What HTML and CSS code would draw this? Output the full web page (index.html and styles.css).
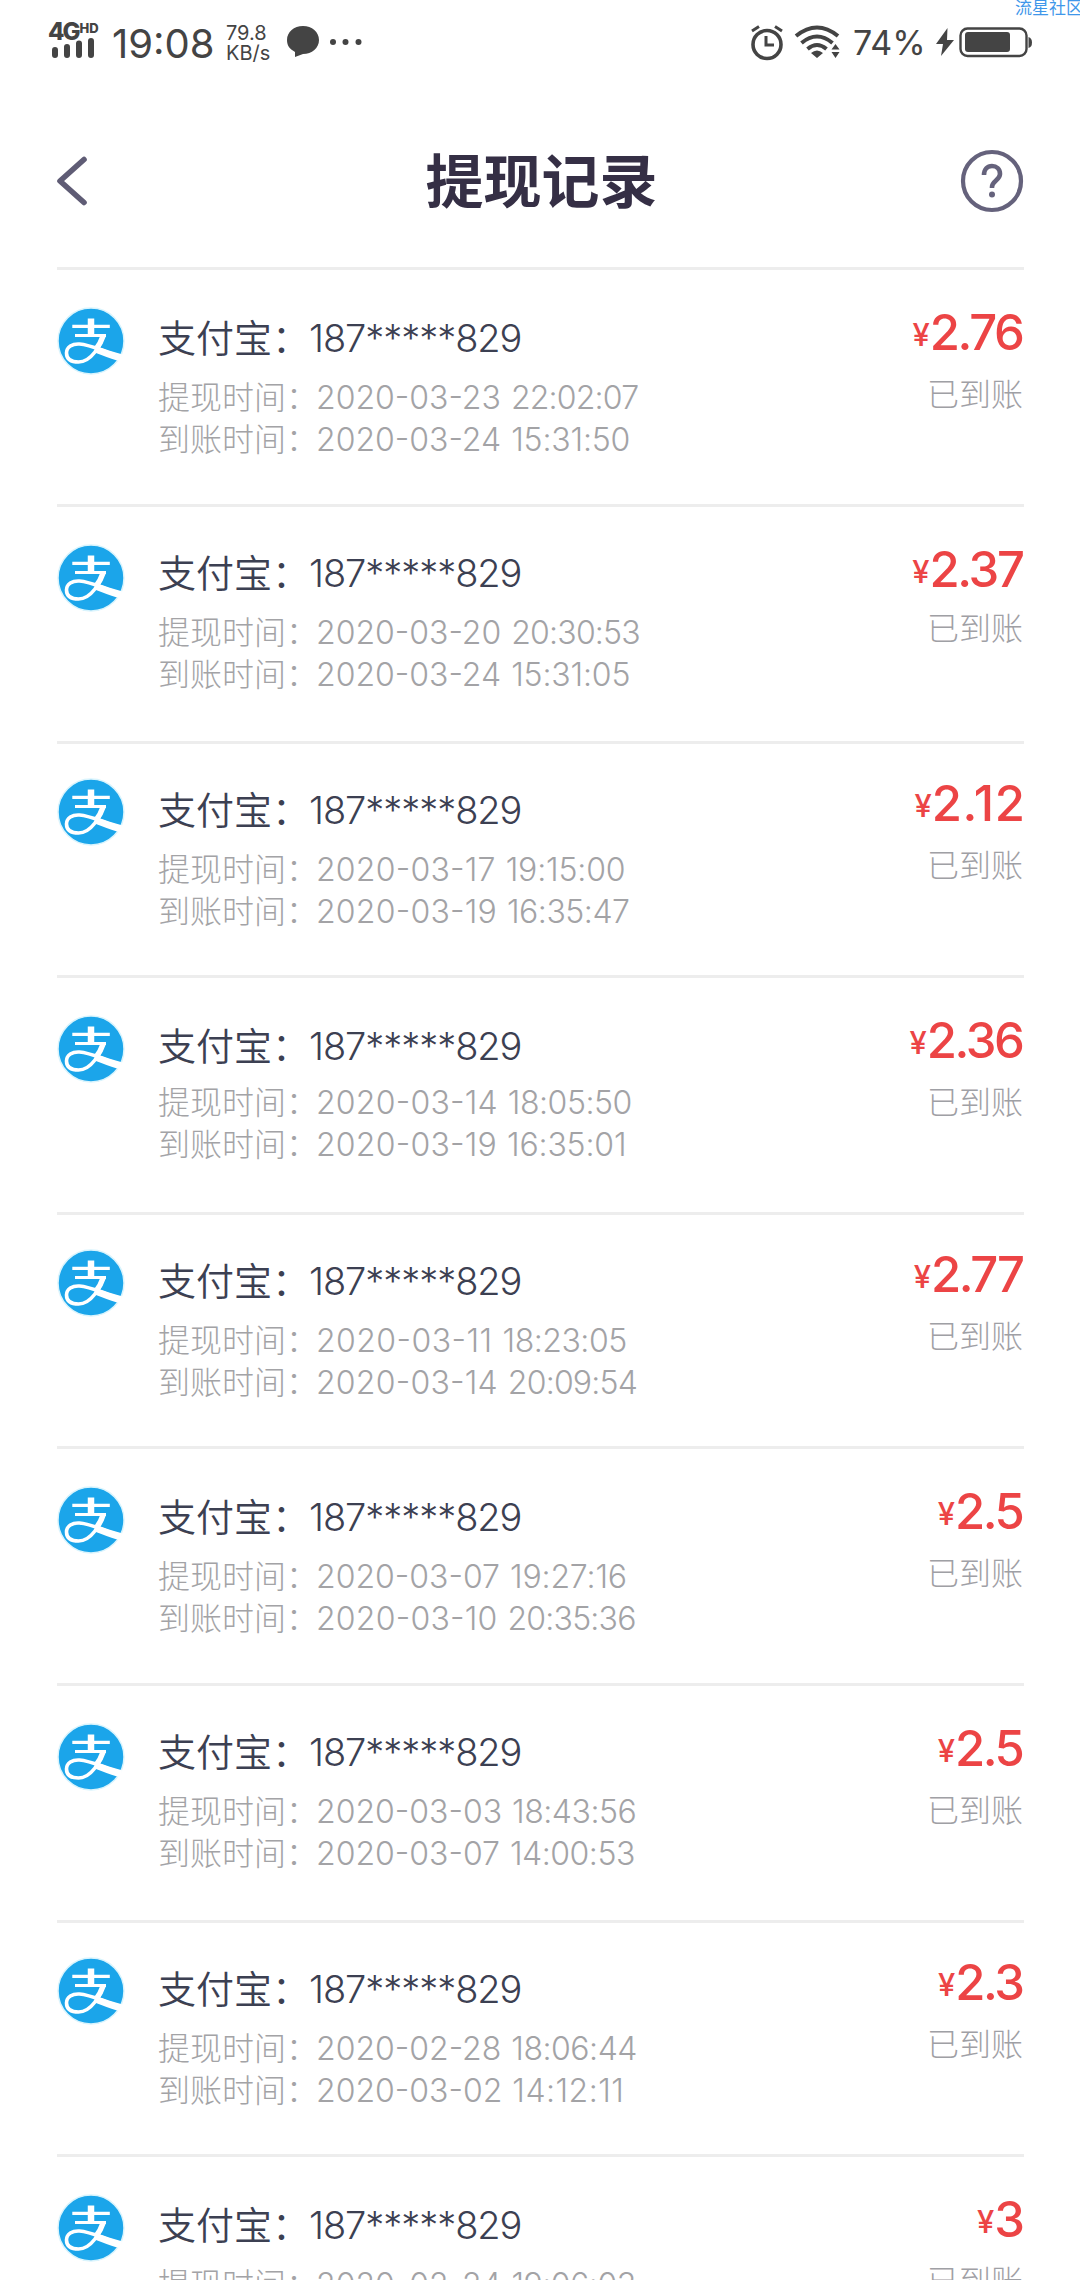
FILE: index.html
```
<!DOCTYPE html>
<html lang="zh-CN">
<head>
<meta charset="utf-8">
<title>提现记录</title>
<link rel="stylesheet" href="styles.css">
</head>
<body>
<div class="watermark">流星社区</div>
<header class="status">
  <div class="signal">
    <div class="net"><span>4G</span><small>HD</small></div>
    <svg width="44" height="20" viewBox="0 0 44 20"><path d="M3 12v5M15 9v8M27 5.500v11.500M39 3v14" stroke="#444" stroke-width="6" stroke-linecap="round"/></svg>
  </div>
  <div class="clock">19:08</div>
  <div class="speed"><span>79.8</span><span>KB/s</span></div>
  <svg class="bubble" width="76" height="34" viewBox="0 0 76 34"><path d="M16 1C7 1 0 7 0 15c0 6 3 9 8 12l0 5 8-3c9 0 16-6 16-14S25 1 16 1z" fill="#444"/><g fill="#444"><circle cx="46" cy="17" r="3"/><circle cx="58.500" cy="17" r="3"/><circle cx="71.500" cy="17" r="3"/></g></svg>
  <svg class="alarm" width="34" height="36" viewBox="0 0 34 36" fill="none" stroke="#444"><circle cx="17" cy="19.500" r="14" stroke-width="3.600"/><path d="M16 11v9h8" stroke-width="3"/><path d="M2 6l7-4.500M32 6l-7-4.500" stroke-width="3"/></svg>
  <svg class="wifi" width="48" height="34" viewBox="0 0 48 34" fill="none" stroke="#444" stroke-width="4"><path d="M2 11Q23-6 44 11M7.500 18Q23 5 38.500 18M13.500 24Q23 16 32.500 24"/><path d="M17 28Q23 23 29 28L23 33zM37.500 24.500h8L41.500 19zM37.500 27h8l-4 6z" fill="#444" stroke="none"/></svg>
  <div class="percent">74%</div>
  <svg class="battery" width="96" height="32" viewBox="0 0 96 32"><path d="M11.500 1L0 17h7L5 29l13-16h-7z" fill="#444"/><rect x="24.500" y="1.500" width="66" height="27.500" rx="7" fill="none" stroke="#444" stroke-width="2.400"/><rect x="29" y="5" width="45" height="20" rx="3" fill="#444"/><path d="M92.500 10q3.500 1 3.500 5.500t-3.500 5.500z" fill="#444"/></svg>
</header>
<nav class="bar">
  <svg width="34" height="52" viewBox="0 0 34 52"><path d="M29 4.500L5 26 29 47.500" fill="none" stroke="#5f5c75" stroke-width="5.600" stroke-linecap="round" stroke-linejoin="round"/></svg>
  <h1>提现记录</h1>
  <svg width="64" height="64" viewBox="0 0 64 64" fill="none" stroke="#65627c"><circle cx="32" cy="32" r="29" stroke-width="4.200"/><path d="M24 26c0-6 3.500-9 8-9s8 3 8 8c0 6-8 7-8 13v1" stroke-width="4.600"/><circle cx="32" cy="45.500" r="3" fill="#65627c" stroke="none"/></svg>
</nav>
<main class="list" id="list"></main>
<template id="row">
  <section class="row">
    <svg class="logo" width="68" height="68" viewBox="0 0 68 68"><circle cx="34" cy="34" r="33" fill="#1ba5ea" stroke="#d9f4fd" stroke-width="1.500"/><g fill="none" stroke="#fff"><path d="M15.300 19.300h37.500M18 28.500h31" stroke-width="3.200"/><path d="M34 11.500v17" stroke-width="6.500"/><path d="M46.500 28c-3 10-12 27-25 27-8 0-12-3-12-9 0-6 6-9.500 13-9 12 1 26 8 42 12" stroke-width="3.600"/><path d="M46.500 28c-2 6-4 10-8 15" stroke-width="5.500"/><path d="M39 42.500c8 3 15 6.500 25 8.500" stroke-width="6.500"/></g></svg>
    <div class="info">
      <div class="account"><span class="label">支付宝：</span><span class="number">187*****829</span></div>
      <div class="times"></div>
    </div>
    <div class="right"><div class="amount"><small>¥</small><b></b></div><div class="state">已到账</div></div>
  </section>
</template>
<template id="time">
  <div class="time"><span class="label"></span><span class="date"></span><span class="hour"></span></div>
</template>
<script src="app.js"></script>
</body>
</html>
```
FILE: styles.css
```
* { box-sizing: border-box; }
body { margin: 0; width: 1080px; height: 2280px; overflow: hidden; position: relative; background: #fff; font-family: "Inter", "Noto Sans CJK SC", sans-serif; }
svg { display: block; flex: none; }
.watermark { position: absolute; left: 1015px; top: -4px; font: 400 17px/22px "Noto Sans CJK SC", sans-serif; color: #3f97ea; white-space: nowrap; }
.status { height: 80px; display: flex; align-items: flex-start; padding-left: 48px; color: #444; }
.signal { width: 64px; padding-top: 20px; }
.signal svg { margin: -2px 0 0 4px; }
.net { display: flex; align-items: flex-start; height: 20px; font: 800 24px/24px "Inter"; letter-spacing: -2px; }
.net small { padding: 1px 0 0 1px; font-size: 13px; line-height: 15px; letter-spacing: 0; }
.clock { width: 114px; padding-top: 23px; font: 400 40px/42px "Inter"; white-space: nowrap; }
.speed { width: 61px; padding-top: 23px; display: flex; flex-direction: column; font: 400 20px/20px "Inter"; }
.bubble { margin-top: 25px; }
.alarm { margin: 25px 0 0 387px; }
.wifi { margin: 25px 0 0 10px; }
.percent { width: 83px; margin-left: 11px; padding-top: 23px; font: 400 34px/40px "Inter"; }
.battery { margin-top: 27px; }
.bar { height: 187px; display: flex; justify-content: space-between; align-items: flex-start; padding: 69px 56px 0 55px; }
.bar > svg:first-child { margin-top: 6px; margin-right: 34px; }
h1 { margin: -4px 0 0; font: 700 58px/66px "Noto Sans CJK SC", sans-serif; color: #352f45; }
.list { padding: 0 56px 0 57px; }
.row {
  --logo: 37px; --account: 41px; --times: 64px; --amount: 36px; --state: 68px;
  display: flex; height: 237px; border-top: 3px solid #ededed;
}
.row:nth-child(3), .row:nth-child(5), .row:nth-child(8) { height: 234px; --logo: 34px; --amount: 33px; }
.row:nth-child(2) { --state: 65px; }
.row:nth-child(1), .row:nth-child(4), .row:nth-child(6), .row:nth-child(9) { --account: 43px; }
.row:nth-child(4) { --times: 61px; }
.logo { margin-top: var(--logo); }
.info { flex: 1; padding: var(--account) 0 0 33px; }
.account { display: flex; height: var(--times); font-weight: 300; font-size: 38px; line-height: 50px; color: #3c4052; }
.account .label { width: 151px; font-weight: 350; white-space: nowrap; }
.number { letter-spacing: -1.05px; }
.time { display: flex; height: 42px; font-weight: 300; font-size: 32px; line-height: 42px; color: #a3a3a6; white-space: nowrap; }
.time .label { width: 158px; }
/* each narrow "1" is given back part of a full digit's width */
.date { font-feature-settings: "case"; letter-spacing: calc(var(--ones) * .22px); }
.hour { padding-left: 10px; letter-spacing: calc(var(--ones) * .32px - .8px); }
.right { padding-top: var(--amount); text-align: right; }
.amount { display: flex; justify-content: flex-end; height: var(--state); line-height: 54px; color: #ec4445; white-space: nowrap; }
.amount small { font-size: 31px; font-weight: 500; line-height: 57px; margin-right: 0; }
.amount b { font-size: 49px; font-weight: 500; letter-spacing: calc(var(--ones) * 3px - 2.400px); margin-right: calc(1.500px - var(--ones) * 3px); }
.state { margin-right: 1px; font-weight: 300; font-size: 32px; line-height: 42px; color: #9fa0a5; }
```
FILE: app.js
```
const records = [
  ["2020-03-23 22:02:07", "2020-03-24 15:31:50", "2.76"],
  ["2020-03-20 20:30:53", "2020-03-24 15:31:05", "2.37"],
  ["2020-03-17 19:15:00", "2020-03-19 16:35:47", "2.12"],
  ["2020-03-14 18:05:50", "2020-03-19 16:35:01", "2.36"],
  ["2020-03-11 18:23:05", "2020-03-14 20:09:54", "2.77"],
  ["2020-03-07 19:27:16", "2020-03-10 20:35:36", "2.5"],
  ["2020-03-03 18:43:56", "2020-03-07 14:00:53", "2.5"],
  ["2020-02-28 18:06:44", "2020-03-02 14:12:11", "2.3"],
  ["2020-02-24 19:06:03", null, "3"]
];
const rowTemplate = document.getElementById("row");
const timeTemplate = document.getElementById("time");

function setDigits(element, text) {
  element.textContent = text;
  element.style.setProperty("--ones", text.split("1").length - 1);
}

function timeLine(label, value) {
  const line = timeTemplate.content.cloneNode(true);
  const [date, hour] = value.split(" ");
  line.querySelector(".label").textContent = label;
  setDigits(line.querySelector(".date"), date);
  setDigits(line.querySelector(".hour"), hour);
  return line;
}

for (const [requested, arrived, amount] of records) {
  const row = rowTemplate.content.cloneNode(true);
  const times = row.querySelector(".times");
  times.append(timeLine("提现时间：", requested));
  if (arrived) times.append(timeLine("到账时间：", arrived));
  setDigits(row.querySelector("b"), amount);
  document.getElementById("list").append(row);
}
```
